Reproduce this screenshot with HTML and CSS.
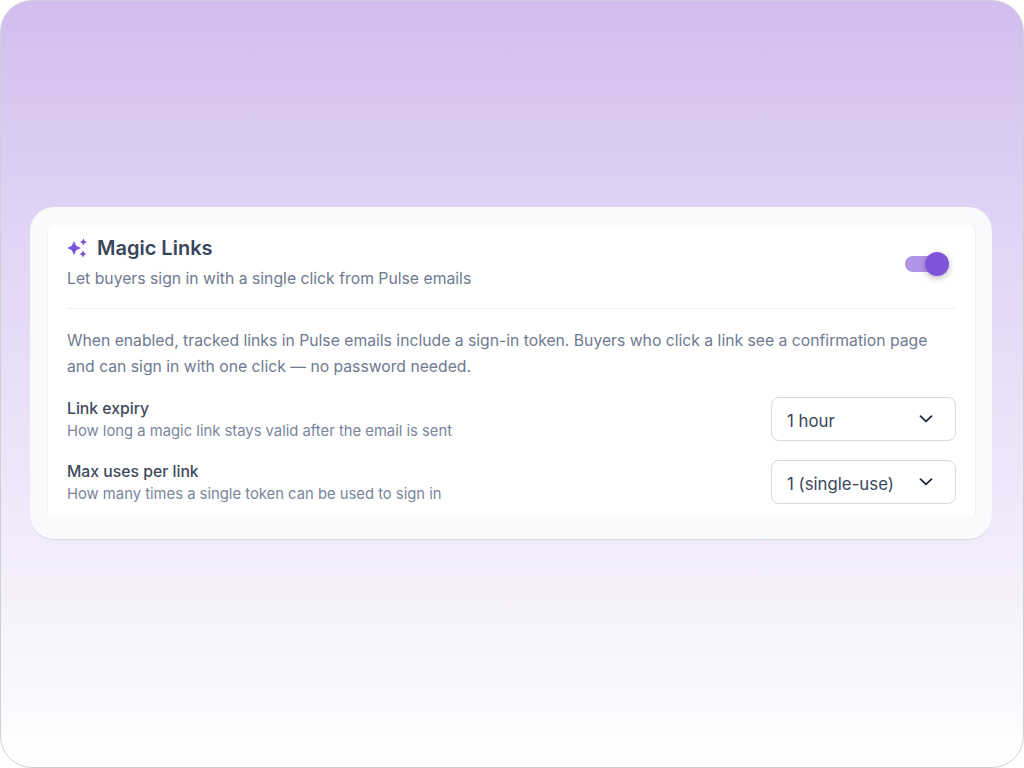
FILE: index.html
```html
<!DOCTYPE html>
<html lang="en">
<head>
<meta charset="utf-8">
<title>Magic Links</title>
<link rel="stylesheet" href="styles.css">
</head>
<body>
<main class="screen">
  <section class="shell">
    <div class="panel">
      <header class="head">
        <div class="head-text">
          <div class="title-row">
            <svg class="sparkle" viewBox="0 0 20 20" width="20" height="20" aria-hidden="true">
              <path d="M7 3 9.2 7.8 13.9 10 9.2 12.2 7 17 4.8 12.2 .2 10 4.8 7.8Z"/>
              <path d="M16.4 .6 17.6 2.8 19.8 4 17.6 5.2 16.4 7.4 15.2 5.2 13 4 15.2 2.8Z"/>
              <path d="M16 12.6 17.2 14.8 19.4 16 17.2 17.2 16 19.4 14.8 17.2 12.6 16 14.8 14.8Z"/>
            </svg>
            <h1 class="title">Magic Links</h1>
          </div>
          <p class="subtitle">Let buyers sign in with a single click from Pulse emails</p>
        </div>
        <div class="toggle"><span class="knob"></span></div>
      </header>
      <div class="body">
        <p class="intro">When enabled, tracked links in Pulse emails include a sign-in token. Buyers who click a link see a confirmation page and can sign in with one click — no password needed.</p>
        <div class="field">
          <div class="field-text">
            <div class="label">Link expiry</div>
            <div class="hint">How long a magic link stays valid after the email is sent</div>
          </div>
          <div class="select">
            <span>1 hour</span>
            <svg class="chevron" viewBox="0 0 16 16" width="16" height="16" aria-hidden="true"><path d="M2.5 5.2 8 10.4 13.5 5.2"/></svg>
          </div>
        </div>
        <div class="field">
          <div class="field-text">
            <div class="label">Max uses per link</div>
            <div class="hint">How many times a single token can be used to sign in</div>
          </div>
          <div class="select">
            <span>1 (single-use)</span>
            <svg class="chevron" viewBox="0 0 16 16" width="16" height="16" aria-hidden="true"><path d="M2.5 5.2 8 10.4 13.5 5.2"/></svg>
          </div>
        </div>
      </div>
    </div>
  </section>
</main>
</body>
</html>
```
FILE: styles.css
```css
* { box-sizing: border-box; }
html, body { margin: 0; height: 100%; background: #fff; }
body { font-family: Inter, "Liberation Sans", sans-serif; -webkit-font-smoothing: antialiased; }
.screen {
  height: 768px;
  padding: 206px 31px 0 29px;
  border: 1px solid #d0d0d4;
  border-radius: 32px;
  background: linear-gradient(180deg, #d2bdef 0%, #e2d5f5 32%, #f0eafa 68%, #ffffff 100%);
  overflow: hidden;
}
.shell {
  height: 332px;
  padding: 18px 17px 24px 18px;
  background: #f8fafc;
  border-radius: 24px;
  box-shadow: 0 0.5px 1px #d6d8e2;
}
.panel {
  height: 100%;
  padding: 0 19px;
  background: #fff;
  border-radius: 6px 6px 0 0;
  box-shadow: -1px 0 0 #f1f2f5, 1px 0 0 #eef0f3;
  overflow: hidden;
}
.head {
  display: flex;
  justify-content: space-between;
  align-items: center;
  height: 84px;
  border-bottom: 1px solid #eeeff2;
  padding: 0 7px 9px 0;
}
.title-row { display: flex; align-items: center; gap: 10px; height: 28px; margin-bottom: 5px; }
.sparkle { fill: #7c55d9; flex: none; }
.title { margin: 0; font-size: 20px; line-height: 28px; font-weight: 600; color: #3a465c; }
.subtitle { margin: 0; font-size: 15.75px; line-height: 24px; color: #6f7a91; }
.toggle { position: relative; width: 32px; height: 16px; border-radius: 8px; background: #b195e6; margin-top: 4px; margin-right: 12px; }
.knob {
  position: absolute;
  right: -12px;
  top: -4px;
  width: 24px;
  height: 24px;
  border-radius: 50%;
  background: #7f56d9;
  box-shadow: 0 2px 6px rgba(60, 40, 90, 0.35);
}
.body { padding-top: 19px; }
.intro { margin: 0 0 17px; font-size: 15.72px; line-height: 26px; color: #6f7a91; }
.field { display: flex; justify-content: space-between; align-items: center; height: 44px; margin-bottom: 19px; }
.field-text { padding-top: 2px; }
.label { font-size: 15.75px; line-height: 22px; font-weight: 500; color: #3f4a60; }
.hint { font-size: 14.8px; line-height: 22px; color: #7a859b; }
.select {
  display: flex;
  align-items: center;
  justify-content: space-between;
  width: 185px;
  height: 44px;
  padding: 3px 21px 0 15px;
  border: 1px solid #d5d9e2;
  border-radius: 8px;
  background: #fff;
  font-size: 16.8px;
  color: #3a465c;
}
.chevron { fill: none; stroke: #1d2939; stroke-width: 1.8; stroke-linecap: round; stroke-linejoin: round; margin-top: -4px; }
```
